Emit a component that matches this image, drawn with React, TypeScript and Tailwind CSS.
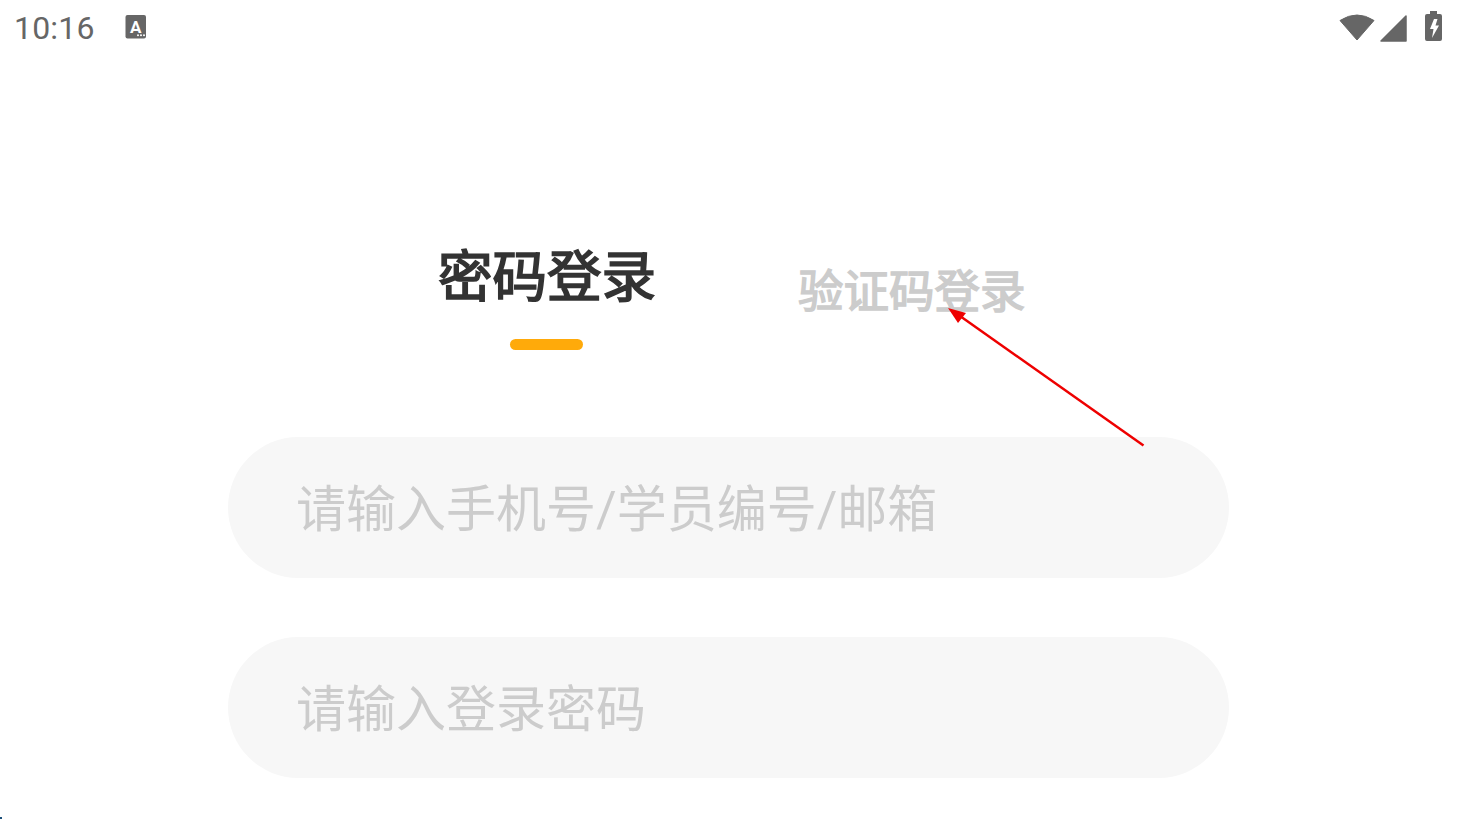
export default function App() {
  return (
    <div className="relative h-[819px] w-[1457px] overflow-hidden bg-white font-['Roboto','Noto_Sans_CJK_SC','Noto_Sans',sans-serif]">
      <div className="flex h-[56px] items-center justify-between pl-[14px] pr-[15px]">
        <div className="flex items-center">
          <span className="font-['Roboto',sans-serif] text-[32px] leading-[56px] tracking-[0.2px] text-[#666666]">10:16</span>
          <svg className="ml-[30px] -translate-y-[1px]" width="23" height="24" viewBox="0 0 23 24">
            <rect x="0.5" y="0" width="20.5" height="23.4" rx="2" fill="#666666" />
            <text x="10.7" y="18" textAnchor="middle" fontSize="17" fontWeight="700" fill="#ffffff" className="font-['Roboto',sans-serif]">A</text>
            <circle cx="13" cy="20.3" r="1" fill="#ffffff" />
            <circle cx="16" cy="20.3" r="1" fill="#ffffff" />
            <circle cx="19" cy="20.3" r="1" fill="#ffffff" />
          </svg>
        </div>
        <div className="flex items-center">
          <svg className="-translate-y-[1px]" width="36" height="28" viewBox="0 0 36 28">
            <path d="M1 7.5 Q18 -3.5 35 7.5 L18 27 Z" fill="#666666" stroke="#666666" strokeLinejoin="round" />
          </svg>
          <svg className="ml-[5px]" width="27" height="27" viewBox="0 0 27 27">
            <path d="M26 1 V26 H1 Z" fill="#666666" stroke="#666666" strokeWidth="1.5" strokeLinejoin="round" />
          </svg>
          <svg className="ml-[18px] -translate-y-[2px]" width="17" height="30" viewBox="0 0 17 30">
            <path d="M5 0 H12 V3 H15 Q17 3 17 5 V28 Q17 30 15 30 H2 Q0 30 0 28 V5 Q0 3 2 3 H5 Z" fill="#666666" />
            <path d="M9 8 H12.5 L10.5 14.5 H14 L7 27 L8.5 18 H5 Z" fill="#ffffff" />
          </svg>
        </div>
      </div>

      <div className="mt-[179px] flex h-[116px] pl-[438px]">
        <div className="flex w-[218px] flex-col items-center">
          <span className="mt-[2px] text-[54.5px] leading-[80px] font-normal whitespace-nowrap text-[#333333] [-webkit-text-stroke:1.7px_#333333]">密码登录</span>
          <span className="mt-[22px] -ml-[2px] h-[11px] w-[73px] rounded-full bg-[#ffaa0a]" />
        </div>
        <span className="mt-[25px] ml-[142px] text-[45.5px] leading-[66px] font-normal whitespace-nowrap text-[#cccccc] [-webkit-text-stroke:1.5px_#cccccc]">验证码登录</span>
      </div>

      <div className="mt-[86px] flex flex-col gap-[59px] pl-[228px]">
        <div className="flex h-[141px] w-[1001px] items-center rounded-full bg-[#f7f7f7] pl-[68px] text-[50px] text-[#cccccc]">
          <span className="mt-[5px]">请输入手机号/学员编号/邮箱</span>
        </div>
        <div className="flex h-[141px] w-[1001px] items-center rounded-full bg-[#f7f7f7] pl-[68px] text-[50px] text-[#cccccc]">
          <span className="mt-[5px]">请输入登录密码</span>
        </div>
      </div>

      <svg className="absolute top-0 left-0" width="1457" height="819" viewBox="0 0 1457 819">
        <line x1="1143.5" y1="445.5" x2="960" y2="316" stroke="#ee0000" strokeWidth="2.5" />
        <path d="M948 308 L966 313 L958 323 Z" fill="#ee0000" />
      </svg>
      <span className="absolute bottom-0 left-0 h-[2px] w-[2px] bg-[#1a4f7a]" />
    </div>
  );
}
